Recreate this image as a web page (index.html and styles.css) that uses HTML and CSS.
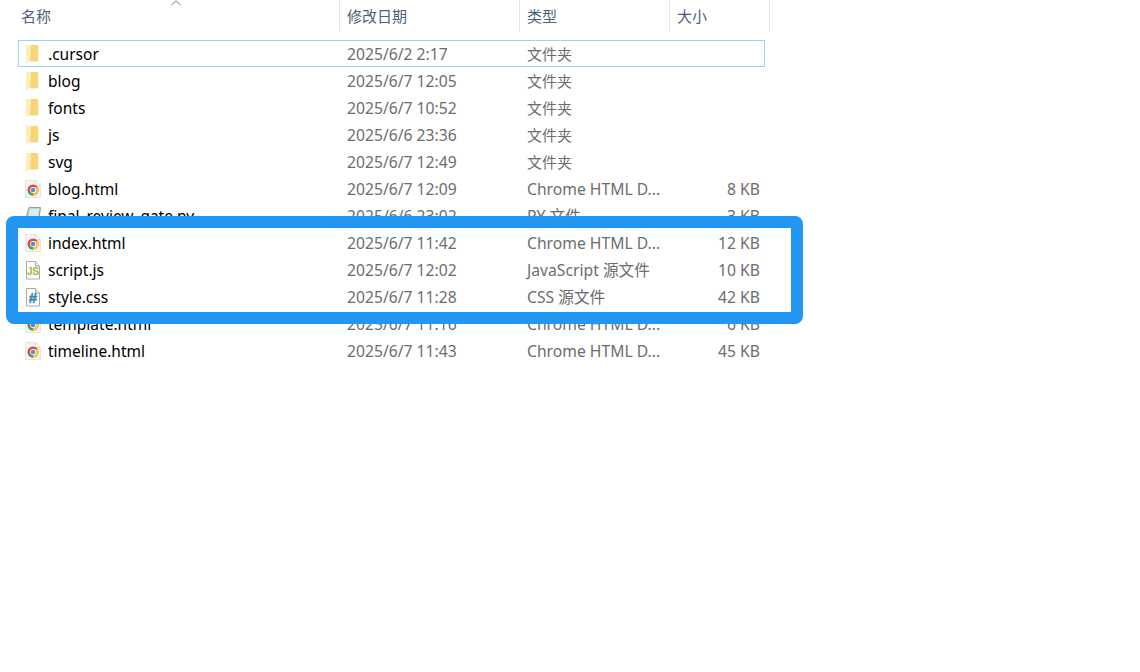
FILE: index.html
```html
<!DOCTYPE html>
<html lang="en">
<head>
    <meta charset="UTF-8">
    <title>Explorer</title>
    <link rel="stylesheet" href="styles.css">
</head>
<body>
    <svg class="defs" width="0" height="0">
        <symbol id="folder" viewBox="0 0 18 20">
            <path d="M6 1h7l.5.600h.8v14.900H6z" fill="#f8d675"/>
            <path d="M2 1h5v15.500l-4.600 2.500L2 18.500z" fill="#fdeeb8"/>
            <path d="M7 1v15.500h7.300v.7H6.500z" fill="#e6bb5a"/>
        </symbol>
        <symbol id="chrome" viewBox="0 0 18 20">
            <path d="M1.500 1.500h10l5 5v12h-15z" fill="#f3f3f3" stroke="#e4e4e4"/>
            <path d="M11.500 1.500v5h5z" fill="#fff" stroke="#dcdcdc"/>
            <circle cx="9" cy="11" r="5.500" fill="#dd4b3e"/>
            <path d="M9 11L4.200 13.700A5.500 5.500 0 0 0 9 16.500z" fill="#3aa757"/>
            <path d="M9 11v5.500A5.500 5.500 0 0 0 13.800 8.300H9z" fill="#fcc934"/>
            <circle cx="9" cy="11" r="3" fill="#fff"/>
            <circle cx="9" cy="11" r="2.300" fill="#4a8df0"/>
        </symbol>
    </svg>

    <!-- column headers -->
    <div class="header">
        <div class="col-name">
            <svg class="sort" width="10" height="6"><path d="M.5 5L5 .8 9.500 5" fill="none" stroke="#7a7a7a"/></svg>名称
        </div>
        <div class="col-date">修改日期</div>
        <div class="col-type">类型</div>
        <div class="col-size">大小</div>
    </div>

    <div class="list">
        <div class="row selected">
            <svg class="icon" viewBox="0 0 18 20"><use href="#folder"/></svg>
            <span class="name">.cursor</span><span class="date">2025/6/2 2:17</span><span class="type zh">文件夹</span><span class="size"></span>
        </div>
        <div class="row">
            <svg class="icon" viewBox="0 0 18 20"><use href="#folder"/></svg>
            <span class="name">blog</span><span class="date">2025/6/7 12:05</span><span class="type zh">文件夹</span><span class="size"></span>
        </div>
        <div class="row">
            <svg class="icon" viewBox="0 0 18 20"><use href="#folder"/></svg>
            <span class="name">fonts</span><span class="date">2025/6/7 10:52</span><span class="type zh">文件夹</span><span class="size"></span>
        </div>
        <div class="row">
            <svg class="icon" viewBox="0 0 18 20"><use href="#folder"/></svg>
            <span class="name">js</span><span class="date">2025/6/6 23:36</span><span class="type zh">文件夹</span><span class="size"></span>
        </div>
        <div class="row">
            <svg class="icon" viewBox="0 0 18 20"><use href="#folder"/></svg>
            <span class="name">svg</span><span class="date">2025/6/7 12:49</span><span class="type zh">文件夹</span><span class="size"></span>
        </div>
        <div class="row">
            <svg class="icon" viewBox="0 0 18 20"><use href="#chrome"/></svg>
            <span class="name">blog.html</span><span class="date">2025/6/7 12:09</span><span class="type">Chrome HTML D...</span><span class="size">8 KB</span>
        </div>
        <div class="row">
            <svg class="icon" viewBox="0 0 18 20">
                <path d="M5 1.500h11.500L15 12H2z" fill="#b5d6dc" stroke="#8f9ea3"/>
                <path d="M6 3h9l-1 7H4.500z" fill="#dcecef"/>
            </svg>
            <span class="name">final_review_gate.py</span><span class="date">2025/6/6 23:02</span><span class="type">PY 文件</span><span class="size">3 KB</span>
        </div>
        <div class="row">
            <svg class="icon" viewBox="0 0 18 20"><use href="#chrome"/></svg>
            <span class="name">index.html</span><span class="date">2025/6/7 11:42</span><span class="type">Chrome HTML D...</span><span class="size">12 KB</span>
        </div>
        <div class="row">
            <svg class="icon" viewBox="0 0 18 20">
                <path d="M2.500 1.500h9l4 4.500v13h-13z" fill="#fff" stroke="#aaa"/>
                <path d="M11.500 1.500V6h4" fill="#eee" stroke="#aaa"/>
                <text x="9" y="15" class="js-mark">JS</text>
            </svg>
            <span class="name">script.js</span><span class="date">2025/6/7 12:02</span><span class="type">JavaScript 源文件</span><span class="size">10 KB</span>
        </div>
        <div class="row">
            <svg class="icon" viewBox="0 0 18 20">
                <path d="M2.500 1.500h9l4 4.500v13h-13z" fill="#fff" stroke="#aaa"/>
                <path d="M11.500 1.500V6h4" fill="#eee" stroke="#aaa"/>
                <text x="9" y="16" class="css-mark">#</text>
            </svg>
            <span class="name">style.css</span><span class="date">2025/6/7 11:28</span><span class="type">CSS 源文件</span><span class="size">42 KB</span>
        </div>
        <div class="row">
            <svg class="icon" viewBox="0 0 18 20"><use href="#chrome"/></svg>
            <span class="name">template.html</span><span class="date">2025/6/7 11:16</span><span class="type">Chrome HTML D...</span><span class="size">6 KB</span>
        </div>
        <div class="row">
            <svg class="icon" viewBox="0 0 18 20"><use href="#chrome"/></svg>
            <span class="name">timeline.html</span><span class="date">2025/6/7 11:43</span><span class="type">Chrome HTML D...</span><span class="size">45 KB</span>
        </div>
    </div>

    <!-- blue annotation box over the list -->
    <div class="highlight"></div>
</body>
</html>
```

FILE: styles.css
```css
body {
    font-family: "Noto Sans", "Noto Sans CJK SC", sans-serif;
    font-size: 15.5px;
    background-color: #fff;
    margin: 0;
    height: 672px;
    overflow: hidden;
    position: relative;
}
.defs {
    position: absolute;
}
.header {
    display: flex;
    height: 32px;
    color: #4c607a;
    font-size: 15px;
}
.header div {
    box-sizing: border-box;
    padding-left: 7px;
    line-height: 32px;
    border-right: 1px solid #e5e5e5;
}
.header .col-name {
    width: 340px;
    padding-left: 21px;
    position: relative;
}
.header .col-date {
    width: 180px;
}
.header .col-type {
    width: 150px;
}
.header .col-size {
    width: 100px;
}
.sort {
    position: absolute;
    left: 171px;
    top: 0;
}
.list {
    margin: 8px 0 0 18px;
    width: 747px;
}
.row {
    display: grid;
    grid-template-columns: 24px 299px 180px 150px 83px;
    align-items: center;
    box-sizing: border-box;
    height: 27px;
    padding: 1px 0 0 6px;
    line-height: 26px;
    white-space: nowrap;
}
.row.selected {
    border: 1px solid #99d1ff;
    padding: 1px 0 0 5px;
    line-height: 24px;
}
.icon {
    width: 18px;
    height: 20px;
}
.name {
    color: #000;
}
.date, .type, .size {
    color: #6d6d6d;
    font-size: 15.7px;
}
.type.zh {
    font-size: 15px;
}
.size {
    text-align: right;
}
.js-mark {
    font: bold 10px "Liberation Sans", sans-serif;
    fill: #bdb13c;
    stroke: #bdb13c;
    stroke-width: 0.2;
    text-anchor: middle;
}
.css-mark {
    font: bold 15px "Liberation Sans", sans-serif;
    fill: #3d8aa8;
    stroke: #3d8aa8;
    stroke-width: 0.5;
    text-anchor: middle;
}
.highlight {
    position: absolute;
    left: 6px;
    top: 216px;
    width: 797px;
    height: 108px;
    box-sizing: border-box;
    border: 12px solid #2196f3;
    border-radius: 8px;
}
```
